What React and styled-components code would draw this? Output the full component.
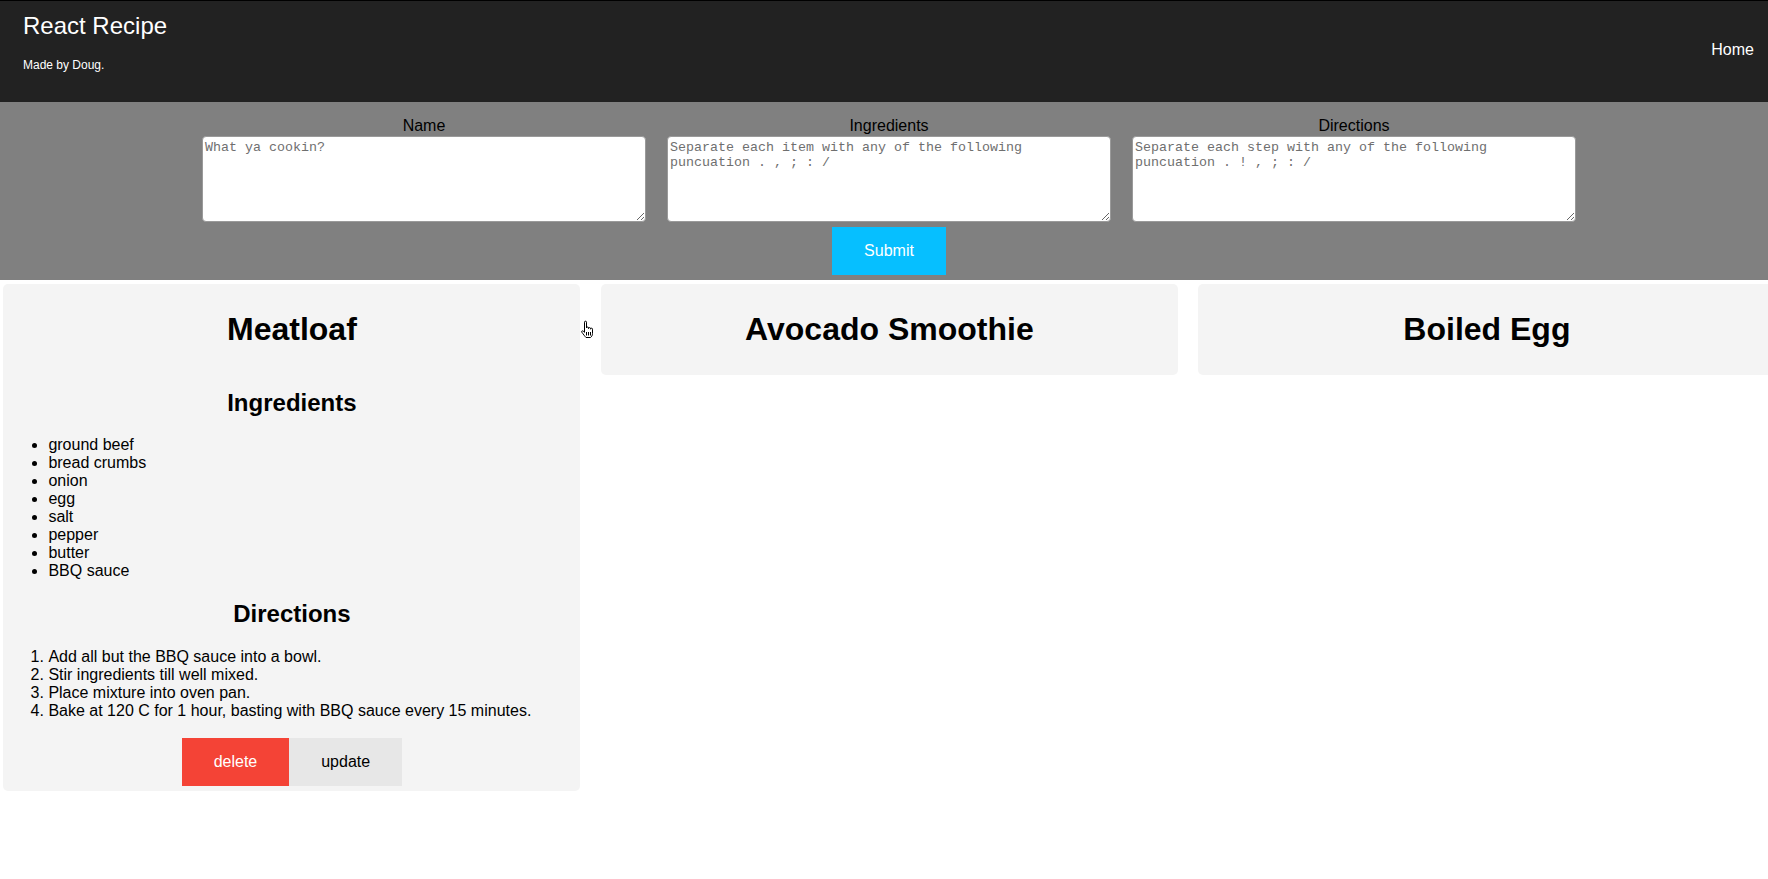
import React from "react";
import styled, { createGlobalStyle } from "styled-components";

const GlobalStyle = createGlobalStyle`
  html, body {
    margin: 0;
    padding: 0;
    background: #fff;
    overflow-x: hidden;
  }
  body {
    font-family: "Liberation Sans", Arial, Helvetica, sans-serif;
    font-size: 16px;
    color: #000;
  }
`;

const recipes = [
  {
    id: 1,
    name: "Meatloaf",
    open: true,
    ingredients: [
      "ground beef",
      "bread crumbs",
      "onion",
      "egg",
      "salt",
      "pepper",
      "butter",
      "BBQ sauce",
    ],
    directions: [
      "Add all but the BBQ sauce into a bowl.",
      "Stir ingredients till well mixed.",
      "Place mixture into oven pan.",
      "Bake at 120 C for 1 hour, basting with BBQ sauce every 15 minutes.",
    ],
  },
  { id: 2, name: "Avocado Smoothie", open: false },
  { id: 3, name: "Boiled Egg", open: false },
];

const Page = styled.div`
  position: relative;
  min-height: 879px;
`;

const Header = styled.header`
  height: 102px;
  box-sizing: border-box;
  border-top: 1px solid #000;
  background-color: #222;
  color: #fff;
  display: flex;
  justify-content: space-between;
  align-items: flex-start;
`;

const Brand = styled.div`
  padding: 11px 0 0 23px;
`;

const Title = styled.div`
  font-size: 24px;
  line-height: 27.6px;
`;

const Tagline = styled.div`
  margin-top: 18px;
  font-size: 12px;
  line-height: 14px;
`;

const NavLink = styled.a`
  align-self: center;
  margin-top: -4px;
  padding-right: 14px;
  font-size: 16px;
  color: #fff;
  text-decoration: none;
  cursor: pointer;
`;

const Form = styled.form`
  background-color: #808080;
  padding: 15px 0 5px 10px;
  display: flex;
  flex-direction: column;
  align-items: center;
`;

const Fields = styled.div`
  display: flex;
  gap: 21px;
`;

const Field = styled.label`
  display: flex;
  flex-direction: column;
  align-items: center;
  width: 444px;
  font-size: 16px;
  line-height: 18.4px;
  color: #000;
`;

const TextArea = styled.textarea`
  width: 100%;
  height: 86px;
  box-sizing: border-box;
  margin: 1px 0 0;
  padding: 3px 2px 2px;
  border: 1px solid #9a9a9a;
  border-radius: 4px;
  background: #fff;
  font-family: "Liberation Mono", "Courier New", monospace;
  font-size: 13.333px;
  line-height: 15px;
  &::placeholder {
    color: #6f6f6f;
  }
`;

const Button = styled.button`
  border: none;
  margin: 0;
  padding: 14.5px 32px;
  font-family: "Liberation Sans", Arial, Helvetica, sans-serif;
  font-size: 16px;
  line-height: 18.4px;
  color: ${(props) => (props.variant === "update" ? "#000" : "#fff")};
  background-color: ${(props) =>
    props.variant === "delete"
      ? "#f44336"
      : props.variant === "update"
      ? "#e7e7e7"
      : "#06bfff"};
  cursor: pointer;
`;

const SubmitButton = styled(Button)`
  margin-top: 5px;
`;

const Cards = styled.div`
  display: flex;
  align-items: flex-start;
  gap: 20.5px;
  padding: 4.5px 0 0 3.4px;
  overflow: hidden;
`;

const Card = styled.div`
  flex: 0 0 577px;
  box-sizing: border-box;
  padding: 5px;
  background-color: #f4f4f4;
  border-radius: 5px;
  display: flow-root;
`;

const RecipeName = styled.h1`
  margin: 21.44px 0 22.5px;
  font-size: 32px;
  line-height: 36.8px;
  font-weight: bold;
  text-align: center;
`;

const Details = styled.div`
  display: flow-root;
  margin-top: -1px;
`;

const SectionTitle = styled.h2`
  margin: 19.92px 0;
  font-size: 24px;
  line-height: 27.6px;
  font-weight: bold;
  text-align: center;
`;

const List = styled.ul`
  margin: 17px 0 16px;
  padding-left: 40px;
  font-size: 16px;
  line-height: 18px;
`;

const Steps = styled.ol`
  margin: 17px 0 18.4px;
  padding-left: 40px;
  font-size: 16px;
  line-height: 18px;
`;

const Actions = styled.div`
  display: flex;
  justify-content: center;
`;

const Cursor = styled.svg`
  position: absolute;
  left: 579px;
  top: 320px;
  pointer-events: none;
`;

const HandCursor = () => (
  <Cursor width="16" height="19" viewBox="0 0 16 19">
    <path
      d="M5.5 2.2a1 1 0 0 1 2 0V8a1 1 0 0 1 2 0v.6a1 1 0 0 1 2 0v.6a1 1 0 0 1 2 0v4.3c0 1.9-1 3.3-2 4H7c-1-1-2.6-3.2-4.2-5.3-.6-.8.4-1.9 1.4-1.1l1.3 1.2z"
      fill="#fff"
      stroke="#000"
      strokeWidth="1"
      strokeLinejoin="round"
    />
    <path d="M7.5 12v3.5M9.5 12v3.5M11.5 12v3.5" stroke="#000" strokeWidth="1" />
  </Cursor>
);

const RecipeCard = ({ recipe }) => (
  <Card>
    <RecipeName>{recipe.name}</RecipeName>
    {recipe.open && (
      <Details>
        <SectionTitle>Ingredients</SectionTitle>
        <List>
          {recipe.ingredients.map((item) => (
            <li key={item}>{item}</li>
          ))}
        </List>
        <SectionTitle>Directions</SectionTitle>
        <Steps>
          {recipe.directions.map((step) => (
            <li key={step}>{step}</li>
          ))}
        </Steps>
        <Actions>
          <Button variant="delete">delete</Button>
          <Button variant="update">update</Button>
        </Actions>
      </Details>
    )}
  </Card>
);

const App = () => {
  return (
    <Page>
      <GlobalStyle />
      <Header>
        <Brand>
          <Title>React Recipe</Title>
          <Tagline>Made by Doug.</Tagline>
        </Brand>
        <NavLink>Home</NavLink>
      </Header>
      <Form onSubmit={(e) => e.preventDefault()}>
        <Fields>
          <Field>
            Name
            <TextArea placeholder="What ya cookin?" />
          </Field>
          <Field>
            Ingredients
            <TextArea placeholder="Separate each item with any of the following puncuation . , ; : /" />
          </Field>
          <Field>
            Directions
            <TextArea placeholder="Separate each step with any of the following puncuation . ! , ; : /" />
          </Field>
        </Fields>
        <SubmitButton type="submit">Submit</SubmitButton>
      </Form>
      <Cards>
        {recipes.map((recipe) => (
          <RecipeCard key={recipe.id} recipe={recipe} />
        ))}
      </Cards>
      <HandCursor />
    </Page>
  );
};

export default App;
